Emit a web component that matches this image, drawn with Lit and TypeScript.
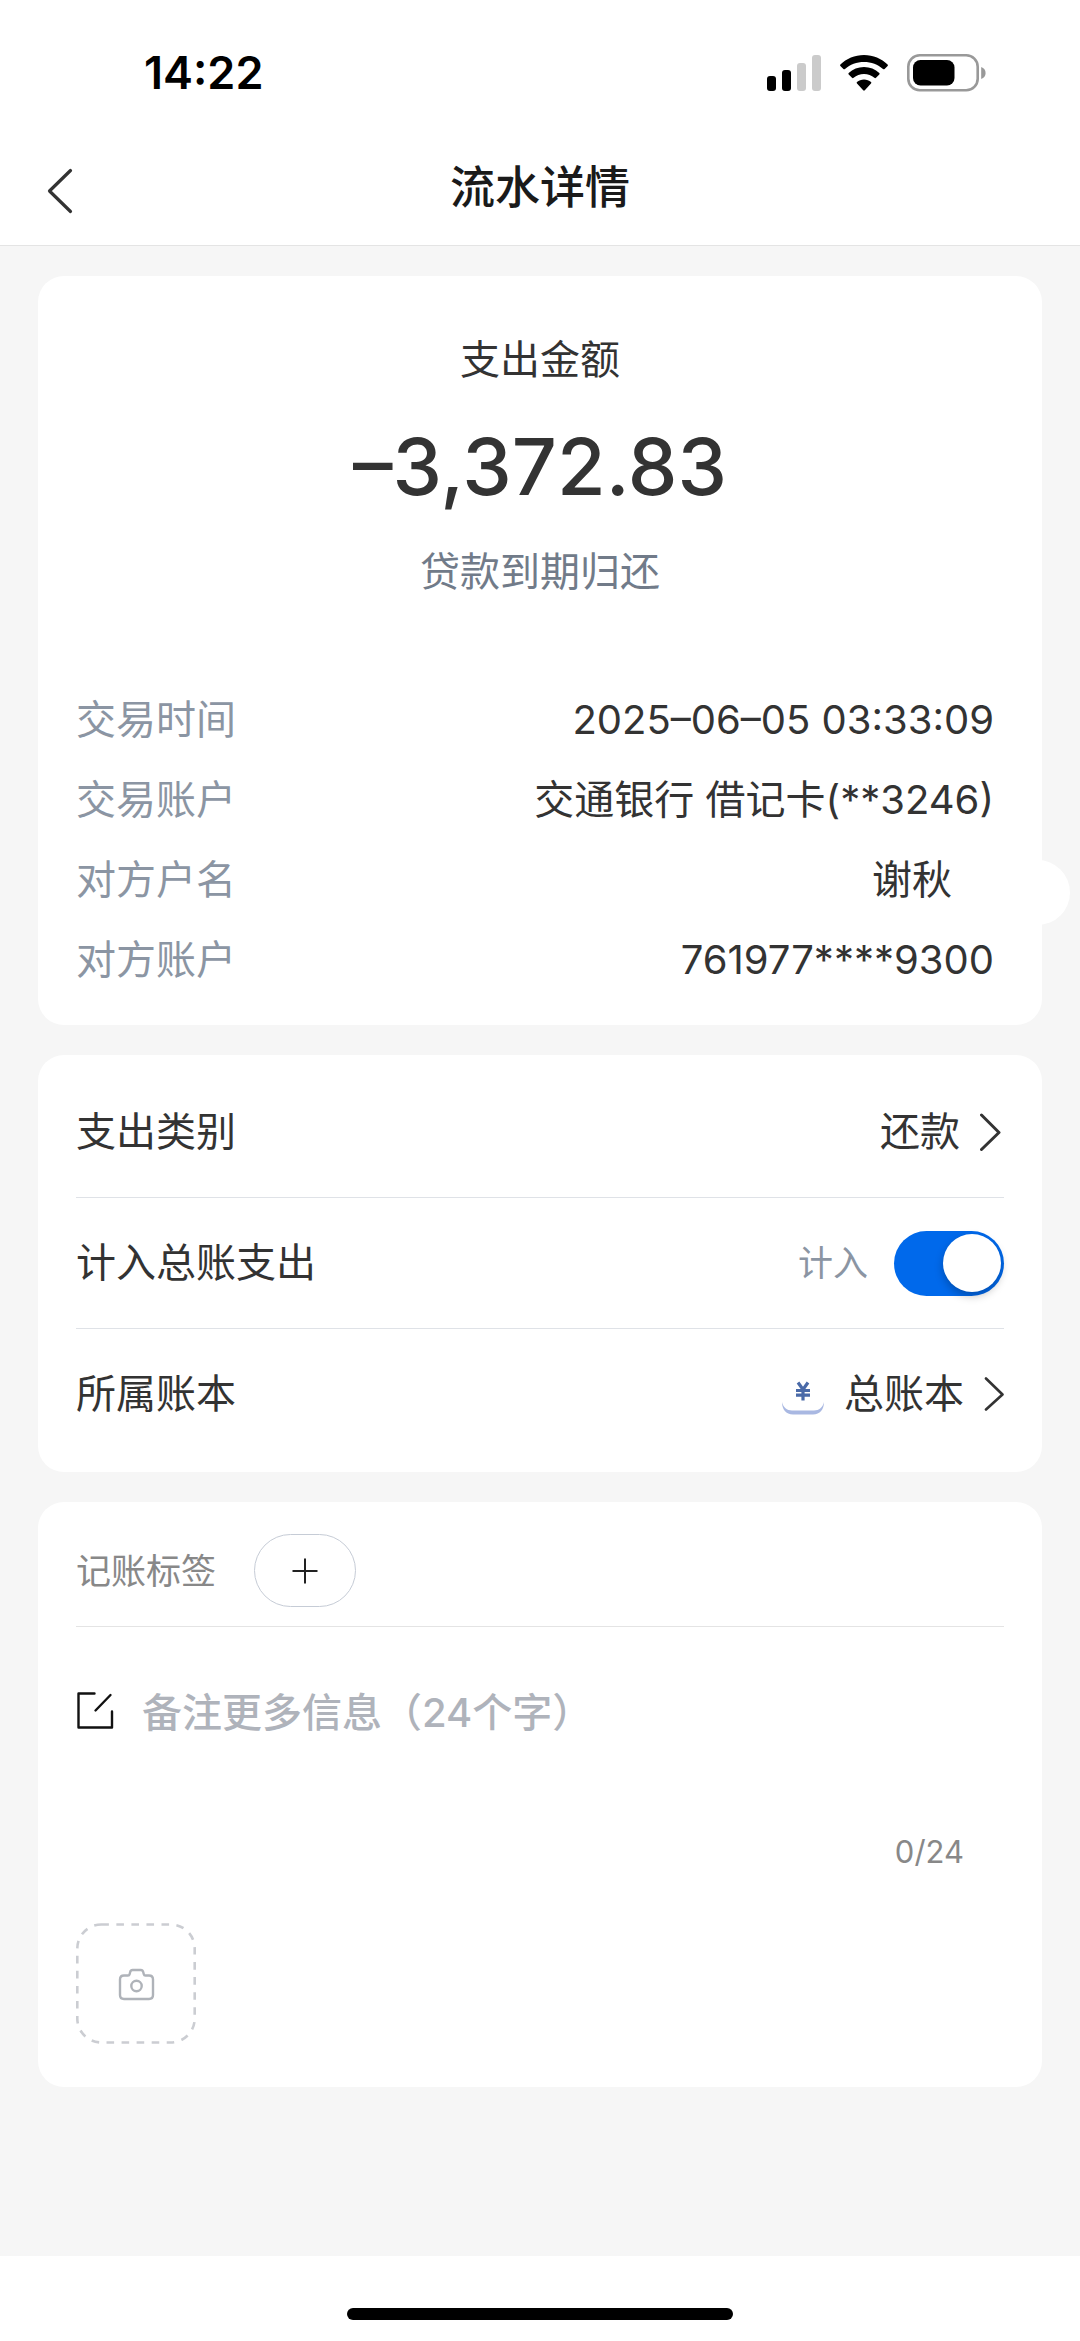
import { LitElement, html, css, svg } from "lit";
import { customElement, state } from "lit/decorators.js";

interface Detail {
  label: string;
  value: string;
  trimmed?: boolean;
}

const DETAILS: Detail[] = [
  { label: "交易时间", value: "2025–06–05 03:33:09" },
  { label: "交易账户", value: "交通银行 借记卡(**3246)" },
  { label: "对方户名", value: "谢秋", trimmed: true },
  { label: "对方账户", value: "761977****9300" },
];

const NOTE_LIMIT = 24;

const signalBars = [
  { x: 0, top: 21, on: true },
  { x: 15, top: 15, on: true },
  { x: 30, top: 8, on: false },
  { x: 45, top: 0, on: false },
];

@customElement("status-bar")
export class StatusBar extends LitElement {
  static styles = css`
    .bar {
      display: flex;
      align-items: center;
      justify-content: space-between;
      padding: 44px 94px 29px 144px;
      color: #000;
    }
    .time {
      font-size: 45px;
      line-height: 58px;
      font-weight: 600;
    }
    .icons {
      display: flex;
      align-items: center;
      gap: 19px;
    }
    svg {
      display: block;
    }
  `;

  render() {
    return html`
      <div class="bar">
        <span class="time">14:22</span>
        <div class="icons">
          <svg width="54" height="36" viewBox="0 0 54 36" aria-hidden="true">
            ${signalBars.map(
              (b) => svg`<rect x=${b.x} y=${b.top} width="9" height=${36 - b.top} rx="3"
                fill=${b.on ? "#000" : "#cbcbcb"} />`
            )}
          </svg>
          <svg width="48" height="36" viewBox="0 0 48 36" aria-hidden="true">
            <path d="M24 0C33.2 0 41.600 3.600 47.600 9.500Q48.300 10.300 47.600 11L44.600 14Q43.800 14.700 43 14C38 9.500 31.300 7 24 7S10 9.500 5 14Q4.200 14.700 3.400 14L.4 11Q-.3 10.300.4 9.500C6.400 3.600 14.800 0 24 0Z" />
            <path d="M24 12C29.900 12 35.300 14.200 39.300 17.900Q40 18.700 39.300 19.500L36 22.800Q35.200 23.500 34.400 22.800C31.600 20.400 28 19 24 19S16.400 20.400 13.600 22.800Q12.800 23.500 12 22.800L8.700 19.500Q8 18.700 8.700 17.900C12.700 14.200 18.100 12 24 12Z" />
            <path d="M24 24.400C26.700 24.400 29.200 25.400 31 27Q31.800 27.800 31 28.600L24.800 35.300Q24 36 23.200 35.300L17 28.600Q16.200 27.800 17 27C18.800 25.400 21.300 24.400 24 24.400Z" />
          </svg>
          <svg width="79" height="38" viewBox="0 0 79 38" aria-hidden="true">
            <rect x="1.300" y="1.300" width="69.400" height="35" rx="11.500" fill="none" stroke="#999" stroke-width="2.600" />
            <rect x="6" y="6" width="41.500" height="25.500" rx="7.500" />
            <path d="M74.200 13C77 14 78.600 16.200 78.600 19S77 24 74.200 25Z" fill="#999" />
          </svg>
        </div>
      </div>
    `;
  }
}

@customElement("app-root")
export class AppRoot extends LitElement {
  @state() private counted = true;
  @state() private note = "";

  static styles = css`
    :host {
      display: flex;
      flex-direction: column;
      min-height: 100vh;
      background: #f6f6f6;
      color: #333;
      font-family: Inter, "Noto Sans CJK SC", sans-serif;
      font-size: 40px;
      line-height: 60px;
    }
    *,
    *::before {
      box-sizing: border-box;
    }
    status-bar {
      display: block;
    }
    svg {
      display: block;
      flex: none;
    }
    button,
    textarea {
      margin: 0;
      padding: 0;
      border: 0;
      background: none;
      color: inherit;
      font: inherit;
    }
    h1,
    h2,
    p,
    dl,
    dd {
      margin: 0;
      font-weight: 400;
      font-size: inherit;
    }

    .top {
      background: #fff;
      border-bottom: 1px solid #e4e4e4;
    }
    .nav {
      display: grid;
      grid-template-columns: 1fr auto 1fr;
      align-items: center;
      height: 114px;
    }
    .back {
      justify-self: start;
      padding: 12px 47px 6px;
    }
    .nav .title {
      color: #1a1a1a;
      font-size: 45px;
      font-weight: 500;
    }

    .content {
      flex: 1;
      display: flex;
      flex-direction: column;
      gap: 30px;
      padding: 30px 38px;
    }
    .card {
      position: relative;
      background: #fff;
      border-radius: 26px;
      padding: 0 38px;
    }

    .summary {
      padding-top: 54px;
      padding-bottom: 25px;
    }
    .summary::before {
      content: "";
      position: absolute;
      right: -28px;
      bottom: 100px;
      width: 65px;
      height: 65px;
      border-radius: 50%;
      background: #fff;
    }
    .headline {
      display: flex;
      flex-direction: column;
      align-items: center;
      gap: 28px;
      padding-bottom: 78px;
    }
    .headline .amount {
      font-size: 79px;
      line-height: 96px;
      font-weight: 500;
    }
    .reason {
      color: #717b89;
    }
    .detail {
      position: relative;
      display: flex;
      align-items: center;
      justify-content: space-between;
      height: 80px;
      padding-right: 10px;
    }
    .detail dt {
      color: #8b95a3;
    }
    .trimmed {
      padding-right: 42px;
    }

    .settings {
      padding-top: 11px;
      padding-bottom: 13px;
    }
    .row {
      display: flex;
      align-items: center;
      justify-content: space-between;
      width: 100%;
      height: 131px;
      text-align: left;
    }
    .row + .row {
      border-top: 1px solid #dfe2e7;
    }
    .side {
      display: flex;
      align-items: center;
      gap: 20px;
    }
    .side.wide {
      gap: 26px;
    }
    .hint {
      color: #8b95a3;
      font-size: 35px;
    }
    .switch {
      appearance: none;
      display: flex;
      align-items: center;
      justify-content: flex-start;
      width: 110px;
      height: 65px;
      margin: 0;
      padding: 0 3px;
      border-radius: 33px;
      background: #d5d8dd;
    }
    .switch:checked {
      justify-content: flex-end;
      background: #0069eb;
    }
    .switch::before {
      content: "";
      width: 58px;
      height: 58px;
      border-radius: 50%;
      background: #fff;
      box-shadow: 0 4px 8px rgba(0, 0, 0, 0.25);
    }

    .extra {
      padding-bottom: 43px;
    }
    .tags {
      display: flex;
      align-items: center;
      gap: 38px;
      padding: 32px 0 19px;
      border-bottom: 1px solid #e4e4e4;
      color: #888;
      font-size: 35px;
    }
    .add {
      display: grid;
      place-items: center;
      width: 102px;
      height: 73px;
      border: 1px solid #c6ccd6;
      border-radius: 37px;
    }
    .note {
      display: flex;
      align-items: flex-start;
      gap: 28px;
      padding-top: 56px;
    }
    .pen {
      display: flex;
      padding-top: 9px;
    }
    .note textarea {
      flex: 1;
      height: 120px;
      outline: none;
      resize: none;
      overflow: hidden;
      font-weight: 500;
    }
    .note textarea::placeholder {
      color: #afb3bb;
      opacity: 1;
    }
    .extra .count {
      padding: 29px 40px 51px 0;
      color: #888;
      font-size: 31px;
      line-height: 40px;
      text-align: right;
    }
    .photo {
      display: block;
    }

    .home {
      display: flex;
      justify-content: center;
      padding: 52px 0 21px;
      background: #fff;
    }
    .indicator {
      width: 386px;
      height: 12px;
      border-radius: 6px;
      background: #000;
    }
  `;

  private onToggle(e: Event) {
    this.counted = (e.target as HTMLInputElement).checked;
  }

  private onNote(e: Event) {
    this.note = (e.target as HTMLTextAreaElement).value;
  }

  render() {
    return html`
      <header class="top">
        <status-bar></status-bar>
        <nav class="nav">
          <button class="back" aria-label="返回">
            <svg width="26" height="46" viewBox="0 0 26 46" fill="none" stroke="#333" stroke-width="3.200"
              stroke-linecap="round" stroke-linejoin="round">
              <path d="M23.500 2.500L2.500 23L23.500 43.500" />
            </svg>
          </button>
          <h1 class="title">流水详情</h1>
        </nav>
      </header>

      <main class="content">
        <section class="card summary">
          <div class="headline">
            <h2>支出金额</h2>
            <p class="amount">–3,372.83</p>
            <p class="reason">贷款到期归还</p>
          </div>
          <dl>
            ${DETAILS.map(
              (d) => html`<div class="detail">
                <dt>${d.label}</dt>
                <dd class=${d.trimmed ? "trimmed" : ""}>${d.value}</dd>
              </div>`
            )}
          </dl>
        </section>

        <section class="card settings">
          <button class="row">
            <span>支出类别</span>
            <span class="side">
              <span>还款</span>
              <svg width="24" height="38" viewBox="0 0 24 38" fill="none" stroke="#333" stroke-width="3"
                stroke-linecap="round" stroke-linejoin="round">
                <path d="M1.500 2L19 19.500L1.500 36.500" />
              </svg>
            </span>
          </button>
          <div class="row">
            <label for="counted">计入总账支出</label>
            <span class="side wide">
              <span class="hint">${this.counted ? "计入" : "不计入"}</span>
              <input class="switch" id="counted" type="checkbox" .checked=${this.counted} @change=${this.onToggle} />
            </span>
          </div>
          <button class="row">
            <span>所属账本</span>
            <span class="side">
              <svg width="42" height="42" viewBox="0 0 42 42" aria-hidden="true">
                <path d="M0 29C1 34 5 37.500 10 37.500H32C37 37.500 41 34 42 29C42 36.500 38 41.500 31 41.500H11C4 41.500 0 36.500 0 29Z" fill="#a9b8e2" />
                <path d="M16 9.500L21 16.500L26 9.500M14 17.500H28M14 22.200H28M21 16.500V27.500" fill="none" stroke="#4a6aa8" stroke-width="3.200" />
              </svg>
              <span>总账本</span>
              <svg width="20" height="34" viewBox="0 0 20 34" fill="none" stroke="#333" stroke-width="2.600"
                stroke-linecap="round" stroke-linejoin="round">
                <path d="M2 1.500L18.500 17.500L2 32.500" />
              </svg>
            </span>
          </button>
        </section>

        <section class="card extra">
          <div class="tags">
            <span>记账标签</span>
            <button class="add" aria-label="添加标签">
              <svg width="26" height="26" viewBox="0 0 26 26" fill="none" stroke="#222" stroke-width="2">
                <path d="M13 0.500V25.500M0.500 13H25.500" />
              </svg>
            </button>
          </div>
          <div class="note">
            <label class="pen" for="note" aria-label="备注">
              <svg width="38" height="38" viewBox="0 0 38 38" fill="none" stroke="#111" stroke-width="2.400"
                stroke-linecap="round" stroke-linejoin="round">
                <path d="M18.500 1.500H2.500V35.500H36V19.500M34.500 3L19.500 18.500" />
              </svg>
            </label>
            <textarea id="note" maxlength=${NOTE_LIMIT} placeholder="备注更多信息（24个字）" .value=${this.note}
              @input=${this.onNote}></textarea>
          </div>
          <p class="count">${this.note.length}/${NOTE_LIMIT}</p>
          <button class="photo" aria-label="添加照片">
            <svg width="120" height="121" viewBox="0 0 120 121" fill="none">
              <rect x="1.300" y="1.500" width="117.400" height="118" rx="24" stroke="#cbcdd2" stroke-width="2.600"
                stroke-dasharray="7.600 7.450" />
              <path d="M48 52.500H52Q53.300 52.500 53.600 51.200L54.200 49Q54.700 47 56.600 47H64.800Q66.700 47 67.200 49L67.800 51.200Q68.100 52.500 69.400 52.500H73Q77 52.500 77 56.500V72Q77 76 73 76H48Q44 76 44 72V56.500Q44 52.500 48 52.500Z"
                stroke="#afb3b9" stroke-width="2.400" />
              <circle cx="60.500" cy="63" r="5.200" stroke="#afb3b9" stroke-width="2.400" />
            </svg>
          </button>
        </section>
      </main>

      <footer class="home"><div class="indicator"></div></footer>
    `;
  }
}
